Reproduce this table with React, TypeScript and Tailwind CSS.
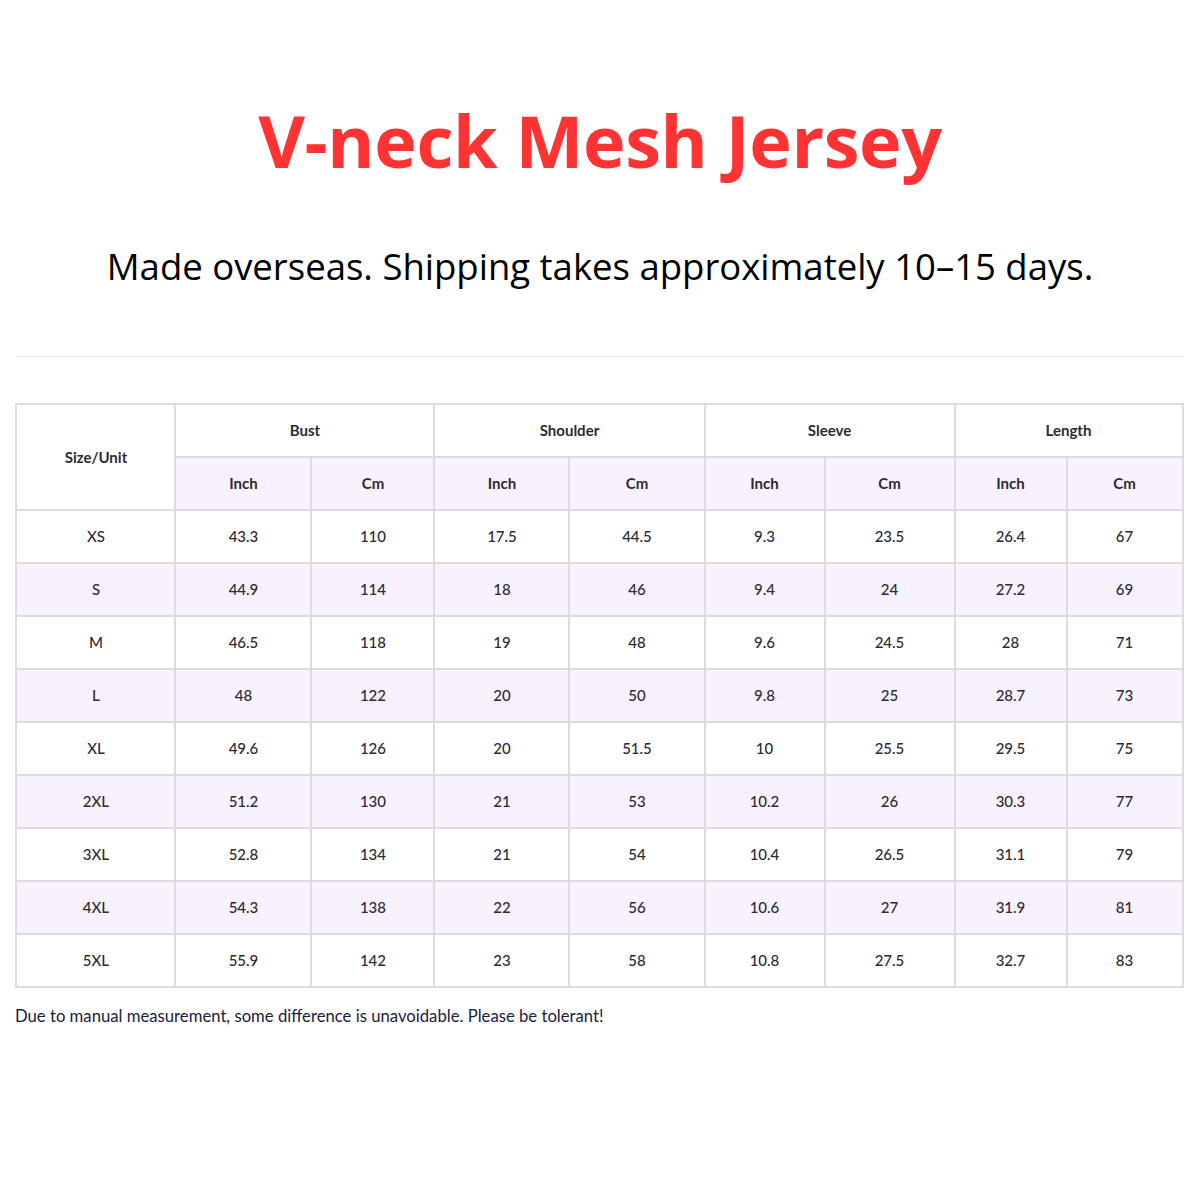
import React from "react";

const rows = [
  ["XS", "43.3", "110", "17.5", "44.5", "9.3", "23.5", "26.4", "67"],
  ["S", "44.9", "114", "18", "46", "9.4", "24", "27.2", "69"],
  ["M", "46.5", "118", "19", "48", "9.6", "24.5", "28", "71"],
  ["L", "48", "122", "20", "50", "9.8", "25", "28.7", "73"],
  ["XL", "49.6", "126", "20", "51.5", "10", "25.5", "29.5", "75"],
  ["2XL", "51.2", "130", "21", "53", "10.2", "26", "30.3", "77"],
  ["3XL", "52.8", "134", "21", "54", "10.4", "26.5", "31.1", "79"],
  ["4XL", "54.3", "138", "22", "56", "10.6", "27", "31.9", "81"],
  ["5XL", "55.9", "142", "23", "58", "10.8", "27.5", "32.7", "83"],
];

const widths = [159, 136, 123, 135, 135, 120, 130, 112, 116];
const groups = ["Bust", "Shoulder", "Sleeve", "Length"];

const cell = "border-2 border-[#dcdcde] text-center align-middle h-[53px] p-0";

export default function App() {
  return (
    <div className="w-[1200px] h-[1200px] bg-white flex flex-col items-center">
      <h1 className="mt-[92px] text-[72px] leading-[96px] font-bold text-[#ff3333] font-['Open_Sans',sans-serif] tracking-[-0.4px]">
        V-neck Mesh Jersey
      </h1>
      <p className="mt-[56px] text-[36.5px] leading-[44px] text-black font-['Open_Sans',sans-serif]">
        Made overseas. Shipping takes approximately 10–15 days.
      </p>
      <div className="mt-[68px] w-[1168px] h-[1px] bg-[#ececec]" />
      <table className="mt-[46px] ml-[-1px] w-[1166px] border-collapse table-fixed font-['Lato',sans-serif] text-[15px] text-[#2b2b36]">
        <colgroup>
          {widths.map((w, i) => (
            <col key={i} style={{ width: w }} />
          ))}
        </colgroup>
        <thead>
          <tr>
            <th rowSpan={2} className={cell + " font-bold"}>
              Size/Unit
            </th>
            {groups.map((g) => (
              <th key={g} colSpan={2} className={cell + " font-bold"}>
                {g}
              </th>
            ))}
          </tr>
          <tr className="bg-[#f7f2fd]">
            {groups.map((g) => (
              <React.Fragment key={g}>
                <th className={cell + " font-bold"}>Inch</th>
                <th className={cell + " font-bold"}>Cm</th>
              </React.Fragment>
            ))}
          </tr>
        </thead>
        <tbody>
          {rows.map((r, i) => (
            <tr key={r[0]} className={i % 2 === 1 ? "bg-[#f7f2fd]" : "bg-white"}>
              {r.map((v, j) => (
                <td key={j} className={cell + " font-medium"}>
                  {v}
                </td>
              ))}
            </tr>
          ))}
        </tbody>
      </table>
      <p className="self-start ml-[15px] mt-[17px] text-[16.7px] leading-[22px] text-[#1c1c3c] font-['Lato',sans-serif]">
        Due to manual measurement, some difference is unavoidable. Please be tolerant!
      </p>
    </div>
  );
}
